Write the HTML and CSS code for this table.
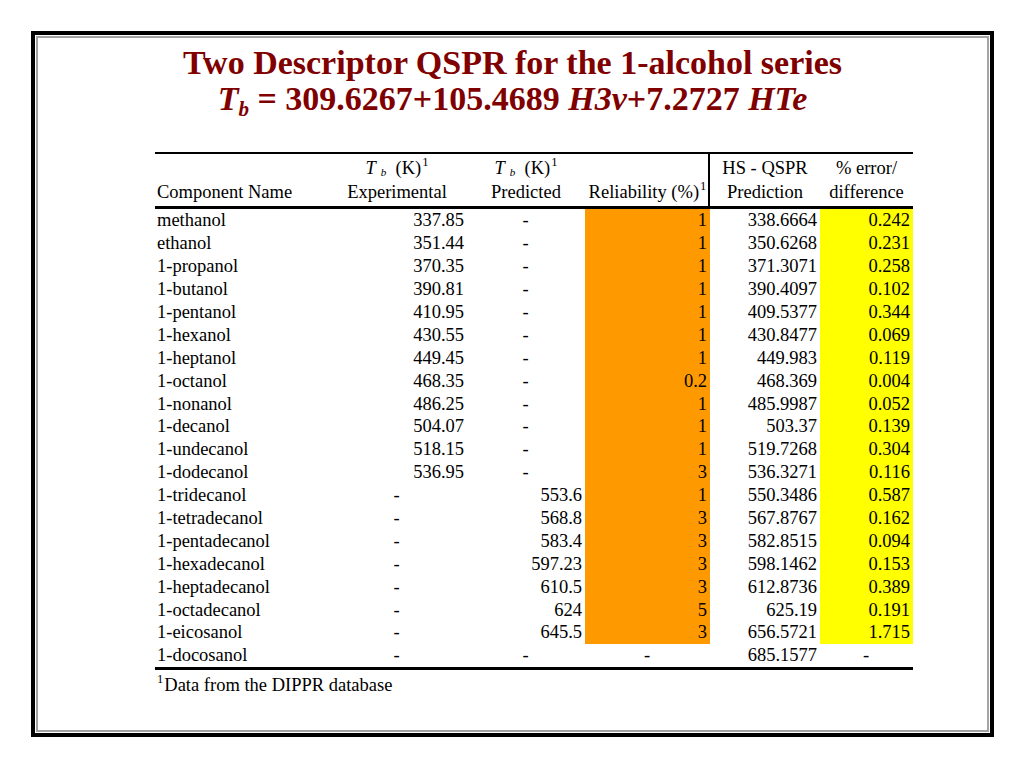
FILE: index.html
```html
<!DOCTYPE html>
<html lang="en">
<head>
<meta charset="utf-8">
<title>Two Descriptor QSPR for the 1-alcohol series</title>
<link rel="stylesheet" href="styles.css">
</head>
<body>
<div class="frame">
  <div class="inner">
    <h1 class="title">
      <span class="line">Two Descriptor QSPR for the 1-alcohol series</span>
      <span class="line"><i>T<sub class="tsub">b</sub></i> = 309.6267+105.4689 <i>H3v</i>+7.2727 <i>HTe</i></span>
    </h1>
    <table class="data">
      <colgroup>
        <col class="c1"><col class="c2"><col class="c3"><col class="c4"><col class="c5"><col class="c6">
      </colgroup>
      <thead>
        <tr class="hr1">
          <th></th>
          <th class="ctr"><i>T</i><sub class="hsub">b</sub>&nbsp; (K)<sup class="hsup">1</sup></th>
          <th class="ctr"><i>T</i><sub class="hsub">b</sub>&nbsp; (K)<sup class="hsup">1</sup></th>
          <th class="vline"></th>
          <th class="ctr">HS - QSPR</th>
          <th class="ctr">% error/</th>
        </tr>
        <tr class="hr2">
          <th class="lft">Component Name</th>
          <th class="ctr">Experimental</th>
          <th class="ctr">Predicted</th>
          <th class="ctr vline">Reliability (%)<sup class="hsup">1</sup></th>
          <th class="ctr">Prediction</th>
          <th class="ctr">difference</th>
        </tr>
      </thead>
      <tbody>
        <tr><td>methanol</td><td class="num">337.85</td><td class="dash">-</td><td class="num orange">1</td><td class="num">338.6664</td><td class="num yellow">0.242</td></tr>
        <tr><td>ethanol</td><td class="num">351.44</td><td class="dash">-</td><td class="num orange">1</td><td class="num">350.6268</td><td class="num yellow">0.231</td></tr>
        <tr><td>1-propanol</td><td class="num">370.35</td><td class="dash">-</td><td class="num orange">1</td><td class="num">371.3071</td><td class="num yellow">0.258</td></tr>
        <tr><td>1-butanol</td><td class="num">390.81</td><td class="dash">-</td><td class="num orange">1</td><td class="num">390.4097</td><td class="num yellow">0.102</td></tr>
        <tr><td>1-pentanol</td><td class="num">410.95</td><td class="dash">-</td><td class="num orange">1</td><td class="num">409.5377</td><td class="num yellow">0.344</td></tr>
        <tr><td>1-hexanol</td><td class="num">430.55</td><td class="dash">-</td><td class="num orange">1</td><td class="num">430.8477</td><td class="num yellow">0.069</td></tr>
        <tr><td>1-heptanol</td><td class="num">449.45</td><td class="dash">-</td><td class="num orange">1</td><td class="num">449.983</td><td class="num yellow">0.119</td></tr>
        <tr><td>1-octanol</td><td class="num">468.35</td><td class="dash">-</td><td class="num orange">0.2</td><td class="num">468.369</td><td class="num yellow">0.004</td></tr>
        <tr><td>1-nonanol</td><td class="num">486.25</td><td class="dash">-</td><td class="num orange">1</td><td class="num">485.9987</td><td class="num yellow">0.052</td></tr>
        <tr><td>1-decanol</td><td class="num">504.07</td><td class="dash">-</td><td class="num orange">1</td><td class="num">503.37</td><td class="num yellow">0.139</td></tr>
        <tr><td>1-undecanol</td><td class="num">518.15</td><td class="dash">-</td><td class="num orange">1</td><td class="num">519.7268</td><td class="num yellow">0.304</td></tr>
        <tr><td>1-dodecanol</td><td class="num">536.95</td><td class="dash">-</td><td class="num orange">3</td><td class="num">536.3271</td><td class="num yellow">0.116</td></tr>
        <tr><td>1-tridecanol</td><td class="dash">-</td><td class="num">553.6</td><td class="num orange">1</td><td class="num">550.3486</td><td class="num yellow">0.587</td></tr>
        <tr><td>1-tetradecanol</td><td class="dash">-</td><td class="num">568.8</td><td class="num orange">3</td><td class="num">567.8767</td><td class="num yellow">0.162</td></tr>
        <tr><td>1-pentadecanol</td><td class="dash">-</td><td class="num">583.4</td><td class="num orange">3</td><td class="num">582.8515</td><td class="num yellow">0.094</td></tr>
        <tr><td>1-hexadecanol</td><td class="dash">-</td><td class="num">597.23</td><td class="num orange">3</td><td class="num">598.1462</td><td class="num yellow">0.153</td></tr>
        <tr><td>1-heptadecanol</td><td class="dash">-</td><td class="num">610.5</td><td class="num orange">3</td><td class="num">612.8736</td><td class="num yellow">0.389</td></tr>
        <tr><td>1-octadecanol</td><td class="dash">-</td><td class="num">624</td><td class="num orange">5</td><td class="num">625.19</td><td class="num yellow">0.191</td></tr>
        <tr><td>1-eicosanol</td><td class="dash">-</td><td class="num">645.5</td><td class="num orange">3</td><td class="num">656.5721</td><td class="num yellow">1.715</td></tr>
        <tr class="last"><td>1-docosanol</td><td class="dash">-</td><td class="dash">-</td><td class="dash">-</td><td class="num">685.1577</td><td class="dash">-</td></tr>
      </tbody>
    </table>
    <p class="footnote"><sup class="hsup">1</sup>Data from the DIPPR database</p>
  </div>
</div>
</body>
</html>
```

FILE: styles.css
```css
html, body {
  margin: 0;
  padding: 0;
  background: #ffffff;
}

body {
  font-family: "Liberation Serif", "Times New Roman", serif;
  color: #000000;
}

.frame {
  margin: 31px 0 0 31px;
  width: 963px;
  height: 706px;
  box-sizing: border-box;
  border: 4px solid #000000;
  padding: 1px;
  background: #ffffff;
}

.inner {
  height: 100%;
  box-sizing: border-box;
  border: 2px solid #a3a3a3;
}

.title {
  margin: 0;
  padding-top: 7px;
  text-align: center;
  color: #800000;
  font-size: 34px;
  line-height: 36px;
  font-weight: bold;
}

.title .line {
  display: block;
}

.tsub {
  font-size: 0.62em;
  line-height: 0;
  vertical-align: -0.3em;
}

.data {
  margin: 35px 0 0 117px;
  width: 758px;
  table-layout: fixed;
  border-collapse: separate;
  border-spacing: 0;
  font-size: 18.5px;
}

.c1 { width: 172px; }
.c2 { width: 140px; }
.c3 { width: 118px; }
.c4 { width: 125px; }
.c5 { width: 110px; }
.c6 { width: 93px; }

.data th {
  font-weight: normal;
  padding: 0 2px;
  white-space: nowrap;
}

.data .hr1 th {
  border-top: 2px solid #000000;
  height: 24px;
  line-height: 20px;
  vertical-align: bottom;
}

.data .hr2 th {
  border-bottom: 3px solid #000000;
  height: 28px;
  line-height: 22px;
  vertical-align: middle;
}

.data th.lft {
  text-align: left;
}

.data th.ctr {
  text-align: center;
}

.data th.vline {
  box-shadow: inset -2px 0 0 #000000;
}

.hsub {
  font-size: 0.6em;
  font-style: italic;
  line-height: 0;
  vertical-align: -0.2em;
  margin-left: 5px;
}

.hsup {
  font-size: 0.68em;
  line-height: 0;
  vertical-align: 0.6em;
  margin-left: 1px;
}

.data td {
  height: 22.9px;
  padding: 0 3px 0 2px;
  line-height: 20px;
  white-space: nowrap;
  vertical-align: middle;
}

.data td.num {
  text-align: right;
}

.data td.dash {
  text-align: center;
}

.data td.orange {
  background: #ff9900;
}

.data td.yellow {
  background: #ffff00;
}

.data tr.last td {
  border-bottom: 3px solid #000000;
}

.footnote {
  margin: 4px 0 0 119px;
  font-size: 18.5px;
  line-height: 22px;
}

.footnote .hsup {
  margin-left: 0;
  margin-right: 1px;
}
```
